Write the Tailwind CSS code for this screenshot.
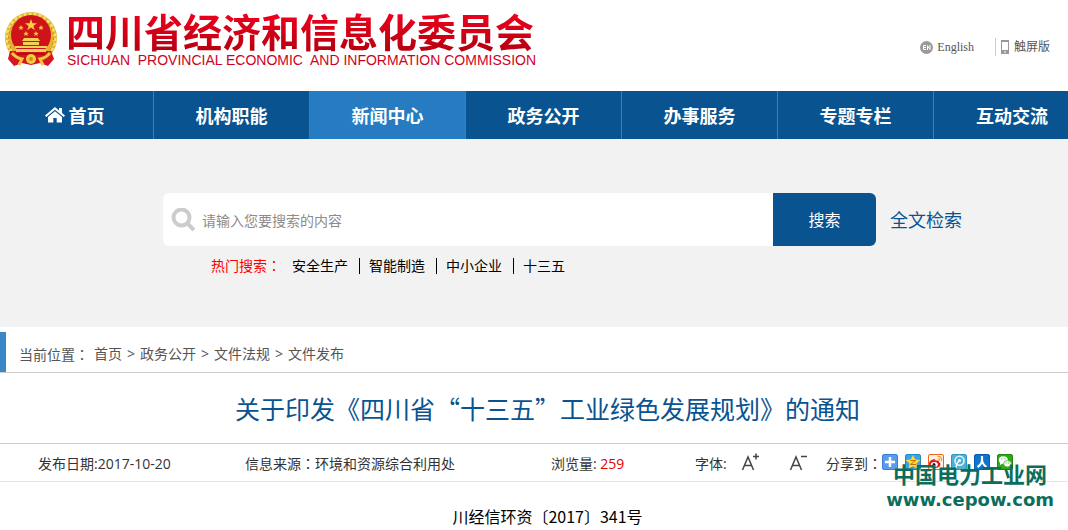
<!DOCTYPE html>
<html lang="zh-CN">
<head>
    <meta charset="UTF-8">
    <meta name="viewport" content="width=device-width, initial-scale=1.0">
    <title>四川省经济和信息化委员会</title>
    <script src="https://cdn.jsdelivr.net/npm/@tailwindcss/browser@4"></script>
</head>
<body class="relative overflow-x-hidden bg-white font-['Open_Sans','Noto_Sans_CJK_SC',sans-serif] text-sm text-[#333]">
    <!-- 页头 -->
    <header class="flex h-[91px] items-start justify-between pl-1 pr-[18px]">
        <a href="#" class="flex items-start">
            <svg class="mt-[11px] h-[56px] w-[54px]" viewBox="0 0 54 56">
                <circle cx="27" cy="27" r="26" fill="#e3b52f"/>
                <circle cx="27" cy="27" r="24" fill="none" stroke="#f7de6d" stroke-width="3" stroke-dasharray="3 2"/>
                <circle cx="27" cy="27" r="22.500" fill="none" stroke="#b98212" stroke-width="1" stroke-dasharray="2 3"/>
                <path d="M6 40 4 48l6 7 8-3 9 2 9-2 8 3 6-7-3-8z" fill="#d9151f"/>
                <path d="M8 42q4 5 10 6l-3 6M46 42q-4 5-10 6l3 6" fill="none" stroke="#f0c83c" stroke-width="3"/>
                <circle cx="27" cy="24" r="20" fill="#d0121b"/>
                <path d="m27 8 1.500 4.200h4.500l-3.600 2.700 1.400 4.300-3.800-2.600-3.800 2.600 1.400-4.300L21 12.200h4.500z" fill="#f6d23c"/>
                <path d="m17 14 .8 1.700 1.900.2-1.400 1.200.4 1.900-1.700-1-1.700 1 .4-1.900-1.400-1.200 1.900-.2zM37 14l.8 1.700 1.900.2-1.400 1.200.4 1.900-1.700-1-1.700 1 .4-1.900-1.400-1.200 1.900-.2zM22 20l.8 1.700 1.900.2-1.400 1.200.4 1.900-1.700-1-1.700 1 .4-1.900-1.400-1.200 1.900-.2zM32 20l.8 1.700 1.900.2-1.400 1.200.4 1.900-1.700-1-1.700 1 .4-1.900-1.400-1.200 1.900-.2z" fill="#f2c530"/>
                <path d="M20 27h14l2 3H18zM19 31h16v3H19zM11 35h32v2H11zM12 38h30v3H12z" fill="#f3cf55"/>
                <path d="M13 42h28v2H13z" fill="#b50d14"/>
                <circle cx="27" cy="48" r="5" fill="#f4cc42"/>
                <circle cx="27" cy="48" r="2" fill="#c8921c"/>
            </svg>
            <span class="ml-2 mt-3 flex flex-col">
                <span class="h-10 bg-linear-to-b from-[#f0001e] to-[#b50010] bg-clip-text font-['Noto_Sans_CJK_SC',sans-serif] text-[39px] leading-9 font-bold text-transparent">四川省经济和信息化委员会</span>
                <span class="whitespace-pre pl-px font-['Liberation_Sans',sans-serif] text-sm leading-4 text-[#d0021b]">SICHUAN  PROVINCIAL ECONOMIC  AND INFORMATION COMMISSION</span>
            </span>
        </a>
        <div class="mt-[38px] flex items-center font-['Liberation_Serif','Noto_Sans_CJK_SC',serif] text-xs leading-[18px] text-[#555]">
            <a href="#" class="flex items-center gap-1">
                <svg class="size-[13px]" viewBox="0 0 13 13">
                    <circle cx="6.500" cy="6.500" r="6.500" fill="#999"/>
                    <path d="M6 4.500H3.500v4H6M3.500 6.500H6M7.500 9V4.500l2.500 4V4" fill="none" stroke="#fff"/>
                </svg>
                English
            </a>
            <a href="#" class="ml-[21px] flex items-center gap-1 border-l border-[#ccc] pl-1">
                <svg class="h-[14px] w-[10px]" viewBox="0 0 10 14">
                    <path d="M1 0h8v14H1z" fill="#999"/>
                    <path d="M2 2h6v8H2zM4 11.500h2v1H4z" fill="#fff"/>
                </svg>
                触屏版
            </a>
        </div>
    </header>

    <!-- 主导航 -->
    <nav class="flex h-12 overflow-hidden bg-[#0a5391] font-['Noto_Sans_CJK_SC',sans-serif] text-lg font-bold text-white">
        <a href="#" class="flex w-[154px] shrink-0 items-center justify-center gap-1 border-r border-[#3081c5] pr-1">
            <svg class="h-4 w-5" viewBox="0 0 20 16" fill="#fff">
                <path d="M10 0 0 8.500l1.300 1.400L10 2.800l8.700 7.100L20 8.500l-3-2.600V1h-3v2.400z"/>
                <path d="m10 4.300-7 5.800V15.500h5.300V11h3.400v4.500H17v-5.400z"/>
            </svg>
            首页
        </a>
        <a href="#" class="flex w-[156px] shrink-0 items-center justify-center border-r border-[#3081c5]">机构职能</a>
        <a href="#" class="flex w-[156px] shrink-0 items-center justify-center border-r border-[#3081c5] bg-[#277cc1]">新闻中心</a>
        <a href="#" class="flex w-[156px] shrink-0 items-center justify-center border-r border-[#3081c5]">政务公开</a>
        <a href="#" class="flex w-[156px] shrink-0 items-center justify-center border-r border-[#3081c5]">办事服务</a>
        <a href="#" class="flex w-[156px] shrink-0 items-center justify-center border-r border-[#3081c5]">专题专栏</a>
        <a href="#" class="flex w-[156px] shrink-0 items-center justify-center">互动交流</a>
    </nav>

    <!-- 搜索 -->
    <section class="h-[188px] bg-[#f2f2f2] pl-[163px] pt-[54px]">
        <form class="flex items-center">
            <label for="keyword" class="flex h-[53px] w-[39px] items-center rounded-l-md bg-white pl-2" aria-label="搜索">
                <svg class="size-6" viewBox="0 0 24 24" fill="none" stroke="#ccc" stroke-width="4">
                    <circle cx="10.500" cy="9.500" r="8"/>
                    <path d="m16 15 7 7"/>
                </svg>
            </label>
            <input id="keyword" type="text" placeholder="请输入您要搜索的内容" class="h-[53px] w-[571px] bg-white pt-0.5 text-sm outline-none placeholder:text-[#8c8c8c]">
            <button type="submit" class="h-[53px] w-[103px] rounded-r-md bg-[#0a5391] text-base text-white">搜索</button>
            <a href="#" class="ml-[14px] text-lg text-[#0a5391]">全文检索</a>
        </form>
        <div class="ml-12 mt-2 flex items-center leading-[22px] text-black">
            <span class="mr-[11px] text-[#f00]">热门搜索<span lang="zh-TW" class="font-['Noto_Sans_CJK_TC',sans-serif]">：</span></span>
            <a href="#">安全生产</a>
            <span class="ml-[11px] mr-[9px] h-4 w-px bg-black"></span>
            <a href="#">智能制造</a>
            <span class="ml-[11px] mr-[9px] h-4 w-px bg-black"></span>
            <a href="#">中小企业</a>
            <span class="ml-[11px] mr-[9px] h-4 w-px bg-black"></span>
            <a href="#">十三五</a>
        </div>
    </section>

    <!-- 当前位置 -->
    <div class="mt-[5px] border-b border-[#ccc]">
        <div class="flex h-10 items-center gap-[5px] border-l-6 border-[#3a87c8] pl-[13px] pt-1 text-[#555]">
            <span>当前位置<span lang="zh-TW" class="font-['Noto_Sans_CJK_TC',sans-serif]">：</span></span>
            <a href="#">首页</a>
            <span>&gt;</span>
            <a href="#">政务公开</a>
            <span>&gt;</span>
            <a href="#">文件法规</a>
            <span>&gt;</span>
            <a href="#">文件发布</a>
        </div>
    </div>

    <!-- 正文 -->
    <main>
        <h1 class="h-[70px] pl-[27px] text-center font-['Noto_Sans_CJK_SC',sans-serif] text-[25px] leading-[70px] text-[#0a5391]">关于印发《四川省“十三五”工业绿色发展规划》的通知</h1>
        <div class="flex h-[39px] items-center border-y border-t-[#ccc] border-b-[#e3e6ec] pl-[38px] pt-0.5 whitespace-nowrap">
            <span class="w-[207px] shrink-0">发布日期:2017-10-20</span>
            <span class="w-[306px] shrink-0">信息来源<span lang="zh-TW" class="font-['Noto_Sans_CJK_TC',sans-serif]">：</span>环境和资源综合利用处</span>
            <span class="w-36 shrink-0">浏览量: <span class="text-[#e60000]">259</span></span>
            <span class="w-[46px] shrink-0">字体:</span>
            <button type="button" class="mb-1 w-12 shrink-0" aria-label="放大字体">
                <svg class="h-[18px] w-5" viewBox="0 0 20 18" fill="none" stroke="#444" stroke-width="1.500">
                    <path d="m1.500 17 5.500-13 5.500 13M3.500 12.500h7M12 3.500h6M15 .5v6"/>
                </svg>
            </button>
            <button type="button" class="mb-1 w-[37px] shrink-0" aria-label="缩小字体">
                <svg class="h-[18px] w-5" viewBox="0 0 20 18" fill="none" stroke="#444" stroke-width="1.500">
                    <path d="m1.500 17 5.500-13 5.500 13M3.500 12.500h7M12 3.500h6"/>
                </svg>
            </button>
            <span class="w-14 shrink-0">分享到<span lang="zh-TW" class="font-['Noto_Sans_CJK_TC',sans-serif]">：</span></span>
            <span class="mb-1 flex gap-[7px]">
                <a href="#" aria-label="更多"><svg class="size-4" viewBox="0 0 16 16"><rect x=".5" y=".5" width="15" height="15" rx="1.500" fill="#5a9bea" stroke="#3b7fd4"/><path d="M8 3v10M3 8h10" stroke="#fff" stroke-width="2.500"/></svg></a>
                <a href="#" aria-label="QQ空间"><svg class="size-4" viewBox="0 0 16 16"><rect x=".5" y=".5" width="15" height="15" rx="1.500" fill="#3aa5dd" stroke="#2389c6"/><path d="m8 1 2.200 4.500 5 .6-3.700 3.400.9 5L8 12.200l-4.400 2.300.9-5L.8 6.100l5-.6z" fill="#ffd83b"/><path d="M5.500 6.500h5l-5 4h5.500" fill="none" stroke="#d06a00"/></svg></a>
                <a href="#" aria-label="新浪微博"><svg class="size-4" viewBox="0 0 16 16"><rect x=".5" y=".5" width="15" height="15" rx="1.500" fill="#fff0e4" stroke="#f1641b"/><path d="M1 10c0-3 4-5.500 6-4.500 1 .5.500 1.500.5 1.500 2-.8 4-.5 3.500 1.200 3 1 1.500 5.800-4 5.800-4 0-6-2-6-4z" fill="#dc1e20"/><ellipse cx="6.300" cy="10.500" rx="3.500" ry="2.500" fill="#fff"/><circle cx="6" cy="10.500" r="1.500" fill="#222"/><path d="M9.500 2.500c3-.5 5 2 4 4.500M10 5c1.200-.3 2 .5 1.700 1.700" fill="none" stroke="#f39a1e" stroke-width="1.200"/></svg></a>
                <a href="#" aria-label="腾讯微博"><svg class="size-4" viewBox="0 0 16 16"><rect x=".5" y=".5" width="15" height="15" rx="1.500" fill="#4fb0d8" stroke="#3296c4"/><circle cx="8.500" cy="6.800" r="4.500" fill="none" stroke="#e9f8ff" stroke-width="1.500"/><circle cx="8.500" cy="6.500" r="1.600" fill="#fff"/><path d="M7.500 7.500Q5 10 5 14" fill="none" stroke="#fff" stroke-width="1.500"/></svg></a>
                <a href="#" aria-label="人人网"><svg class="size-4" viewBox="0 0 16 16"><rect x=".5" y=".5" width="15" height="15" rx="1.500" fill="#0d74cf" stroke="#075bb0"/><path d="M8 2v4q0 4-4.500 7M8 6q.5 4.500 4.500 7" fill="none" stroke="#fff" stroke-width="2.200"/></svg></a>
                <a href="#" aria-label="微信"><svg class="size-4" viewBox="0 0 16 16"><rect x=".5" y=".5" width="15" height="15" rx="1.500" fill="#2fa818" stroke="#1c8b0a"/><ellipse cx="6.300" cy="6" rx="4.500" ry="3.700" fill="#fff"/><path d="m3 8 0 3 3-1.500z" fill="#fff"/><ellipse cx="10.500" cy="9.800" rx="3.900" ry="3.200" fill="#fff" stroke="#2fa818" stroke-width=".7"/><path d="M4.300 4.500h1v1h-1zM7.300 4.500h1v1h-1zM8.600 8.500h1v1h-1zM11.300 8.500h1v1h-1z" fill="#2fa818"/></svg></a>
            </span>
        </div>
        <p class="pl-[27px] pt-[22px] text-center font-['Noto_Sans_CJK_SC',sans-serif] text-base text-black">川经信环资〔2017〕341号</p>
    </main>

    <!-- 水印 -->
    <div class="pointer-events-none absolute right-[14px] top-[459px] text-center font-bold text-[#0b6e5c]">
        <p class="font-['Noto_Sans_CJK_SC',sans-serif] text-[22px] leading-7">中国电力工业网</p>
        <p class="font-['DejaVu_Sans',sans-serif] text-lg leading-[26px]">www.cepow.com</p>
    </div>
</body>
</html>
